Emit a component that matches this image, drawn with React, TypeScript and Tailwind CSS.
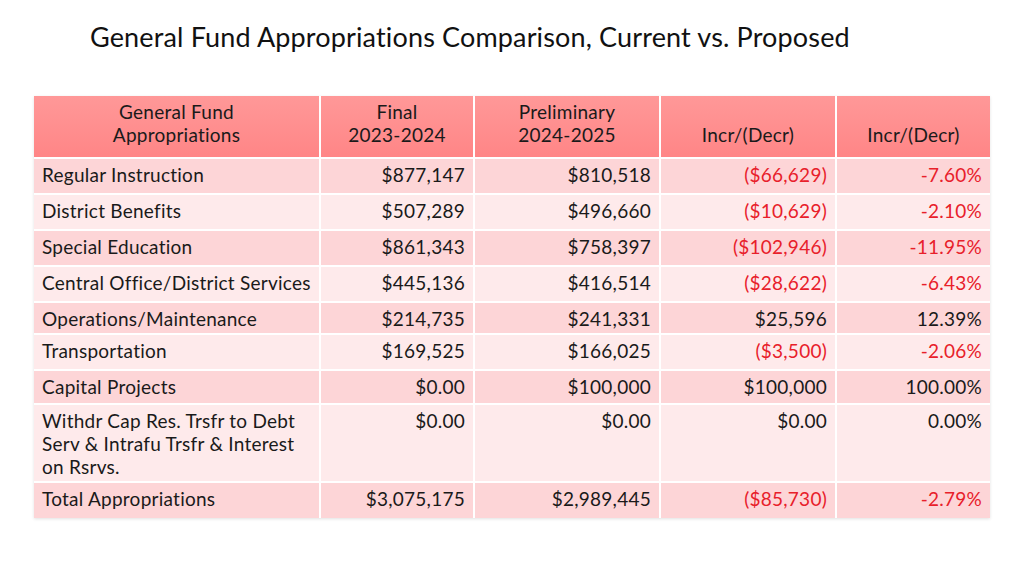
import React from "react";

type Row = {
  label: React.ReactNode;
  final: string;
  prelim: string;
  diff: string;
  pct: string;
  neg: boolean;
  h: string;
};

const rows: Row[] = [
  { label: "Regular Instruction", final: "$877,147", prelim: "$810,518", diff: "($66,629)", pct: "-7.60%", neg: true, h: "h-[36px]" },
  { label: "District Benefits", final: "$507,289", prelim: "$496,660", diff: "($10,629)", pct: "-2.10%", neg: true, h: "h-[36px]" },
  { label: "Special Education", final: "$861,343", prelim: "$758,397", diff: "($102,946)", pct: "-11.95%", neg: true, h: "h-[36px]" },
  { label: "Central Office/District Services", final: "$445,136", prelim: "$416,514", diff: "($28,622)", pct: "-6.43%", neg: true, h: "h-[36px]" },
  { label: "Operations/Maintenance", final: "$214,735", prelim: "$241,331", diff: "$25,596", pct: "12.39%", neg: false, h: "h-[32px]" },
  { label: "Transportation", final: "$169,525", prelim: "$166,025", diff: "($3,500)", pct: "-2.06%", neg: true, h: "h-[36px]" },
  { label: "Capital Projects", final: "$0.00", prelim: "$100,000", diff: "$100,000", pct: "100.00%", neg: false, h: "h-[34px]" },
  {
    label: (
      <>
        Withdr Cap Res. Trsfr to Debt
        <br />
        Serv &amp; Intrafu Trsfr &amp; Interest
        <br />
        on Rsrvs.
      </>
    ),
    final: "$0.00",
    prelim: "$0.00",
    diff: "$0.00",
    pct: "0.00%",
    neg: false,
    h: "h-[78px]",
  },
  { label: "Total Appropriations", final: "$3,075,175", prelim: "$2,989,445", diff: "($85,730)", pct: "-2.79%", neg: true, h: "h-[36px]" },
];

export default function App() {
  return (
    <div className="w-[1024px] h-[576px] bg-white overflow-hidden font-['Lato','Open_Sans',sans-serif] text-[#1a1a1a]">
      <h1 className="pl-[90px] pt-[18px] text-[27px] leading-[38px] tracking-[0.15px] text-[#111]">
        General Fund Appropriations Comparison, Current vs. Proposed
      </h1>
      <div className="ml-[34px] mt-[40px] w-[956px] shadow-[0_1px_3px_rgba(0,0,0,0.12)]">
        <table className="w-full border-collapse text-[19px] leading-[23px] tracking-[0.25px]">
          <colgroup>
            <col className="w-[286px]" />
            <col className="w-[154px]" />
            <col className="w-[186px]" />
            <col className="w-[176px]" />
            <col className="w-[154px]" />
          </colgroup>
          <thead>
            <tr className="h-[62px] bg-[#ff8a8b] bg-gradient-to-b from-[#ff9898] to-[#ff8586]">
              <th className="font-normal align-bottom pb-[11px] text-center">
                General Fund
                <br />
                Appropriations
              </th>
              <th className="font-normal align-bottom pb-[11px] text-center border-l-2 border-white">
                Final
                <br />
                2023-2024
              </th>
              <th className="font-normal align-bottom pb-[11px] text-center border-l-2 border-white">
                Preliminary
                <br />
                2024-2025
              </th>
              <th className="font-normal align-bottom pb-[11px] text-center border-l-2 border-white">
                Incr/(Decr)
              </th>
              <th className="font-normal align-bottom pb-[11px] text-center border-l-2 border-white">
                Incr/(Decr)
              </th>
            </tr>
          </thead>
          <tbody>
            {rows.map((r, i) => {
              const bg = i % 2 === 0 ? "bg-[#fdd5d7]" : "bg-[#feeaeb]";
              const red = r.neg ? "text-[#e8202a]" : "";
              return (
                <tr key={i} className={`${r.h} ${bg} border-t-2 border-white`}>
                  <td className="align-top pt-[4px] pl-[8px]">{r.label}</td>
                  <td className="align-top pt-[4px] pr-[8px] text-right border-l-2 border-white">{r.final}</td>
                  <td className="align-top pt-[4px] pr-[8px] text-right border-l-2 border-white">{r.prelim}</td>
                  <td className={`align-top pt-[4px] pr-[8px] text-right border-l-2 border-white ${red}`}>{r.diff}</td>
                  <td className={`align-top pt-[4px] pr-[8px] text-right border-l-2 border-white ${red}`}>{r.pct}</td>
                </tr>
              );
            })}
          </tbody>
        </table>
      </div>
    </div>
  );
}
